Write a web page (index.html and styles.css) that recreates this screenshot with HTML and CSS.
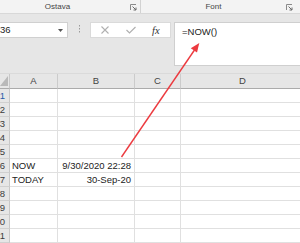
FILE: index.html
```html
<!DOCTYPE html>
<html>
<head>
<meta charset="utf-8">
<link rel="stylesheet" href="styles.css">
</head>
<body>
<div class="app">
  <div class="ribbon">
    <div class="group group-first">
      <span class="group-label">Ostava</span>
      <svg class="launcher" width="7" height="7" viewBox="0 0 7 7"><path d="M0.5 6V0.5H6" fill="none" stroke="#8a8a8a"/><path d="M2.5 2.5L6 6M6 3.5V6H3.5" fill="none" stroke="#6a6a6a"/></svg>
    </div>
    <div class="group group-second">
      <span class="group-label">Font</span>
      <svg class="launcher" width="7" height="7" viewBox="0 0 7 7"><path d="M0.5 6V0.5H6" fill="none" stroke="#8a8a8a"/><path d="M2.5 2.5L6 6M6 3.5V6H3.5" fill="none" stroke="#6a6a6a"/></svg>
    </div>
  </div>

  <div class="formula-row">
    <div class="name-box">
      <span class="name-text">36</span>
      <svg class="dropdown" width="5" height="3" viewBox="0 0 5 3"><path d="M0 0H5L2.5 3Z" fill="#555"/></svg>
    </div>
    <div class="grip"><span></span><span></span><span></span></div>
    <div class="fx-buttons">
      <svg class="btn-icon" width="8" height="8" viewBox="0 0 8 8"><path d="M0.5 0.5L7.5 7.5M7.5 0.5L0.5 7.5" stroke="#b0b0b0" stroke-width="1.1"/></svg>
      <svg class="btn-icon" width="10" height="8" viewBox="0 0 10 8"><path d="M0.5 4L3.5 7L9.5 1" fill="none" stroke="#b0b0b0" stroke-width="1.2"/></svg>
      <span class="fx">fx</span>
    </div>
    <div class="formula-input">=NOW()</div>
  </div>

  <div class="sheet">
    <div class="row head-row">
      <div class="rh corner"><svg width="9" height="14" viewBox="0 0 9 14"><path d="M8 2V12H0Z" fill="#b9b9b9"/></svg></div>
      <div class="c ca ch">A</div>
      <div class="c cb ch">B</div>
      <div class="c cc ch">C</div>
      <div class="c cd ch">D</div>
    </div>
    <div class="row"><div class="rh"><span class="num active">1</span></div><div class="c ca"></div><div class="c cb"></div><div class="c cc"></div><div class="c cd"></div></div>
    <div class="row"><div class="rh"><span class="num">2</span></div><div class="c ca"></div><div class="c cb"></div><div class="c cc"></div><div class="c cd"></div></div>
    <div class="row"><div class="rh"><span class="num">3</span></div><div class="c ca"></div><div class="c cb"></div><div class="c cc"></div><div class="c cd"></div></div>
    <div class="row"><div class="rh"><span class="num">4</span></div><div class="c ca"></div><div class="c cb"></div><div class="c cc"></div><div class="c cd"></div></div>
    <div class="row"><div class="rh"><span class="num">5</span></div><div class="c ca"></div><div class="c cb"></div><div class="c cc"></div><div class="c cd"></div></div>
    <div class="row"><div class="rh"><span class="num">6</span></div><div class="c ca">NOW</div><div class="c cb num-cell">9/30/2020 22:28</div><div class="c cc"></div><div class="c cd"></div></div>
    <div class="row"><div class="rh"><span class="num">7</span></div><div class="c ca">TODAY</div><div class="c cb num-cell">30-Sep-20</div><div class="c cc"></div><div class="c cd"></div></div>
    <div class="row"><div class="rh"><span class="num">8</span></div><div class="c ca"></div><div class="c cb"></div><div class="c cc"></div><div class="c cd"></div></div>
    <div class="row"><div class="rh"><span class="num">9</span></div><div class="c ca"></div><div class="c cb"></div><div class="c cc"></div><div class="c cd"></div></div>
    <div class="row"><div class="rh"><span class="num">0</span></div><div class="c ca"></div><div class="c cb"></div><div class="c cc"></div><div class="c cd"></div></div>
    <div class="row"><div class="rh"><span class="num">1</span></div><div class="c ca"></div><div class="c cb"></div><div class="c cc"></div><div class="c cd"></div></div>
  </div>

  <svg class="callout" width="300" height="243" viewBox="0 0 300 243">
    <line x1="121.5" y1="157" x2="194.5" y2="50" stroke="#ec3b40" stroke-width="1.4"/>
    <polygon points="199.3,43 197,52.6 190.8,48.3" fill="#ec3b40"/>
  </svg>
</div>
</body>
</html>
```

FILE: styles.css
```css
* { box-sizing: border-box; }
html, body { margin: 0; padding: 0; }
body {
  width: 300px;
  height: 243px;
  overflow: hidden;
  background: #e6e6e6;
  font-family: "Liberation Sans", Arial, sans-serif;
}
.app {
  position: relative;
  width: 300px;
  height: 243px;
  overflow: hidden;
}

/* Ribbon */
.ribbon {
  display: flex;
  height: 14px;
  background: #f3f3f3;
  border-bottom: 1px solid #d8d8d8;
}
.group {
  display: flex;
  align-items: center;
  height: 13px;
  flex: none;
}
.group-first {
  margin-left: -15px;
  width: 156px;
  border-right: 1px solid #d2d2d2;
}
.group-second {
  width: 155px;
}
.group-label {
  flex: 1;
  text-align: center;
  font-size: 8px;
  color: #444;
  line-height: 13px;
}
.launcher {
  flex: none;
  margin-right: 3px;
  margin-top: 1px;
}

/* Formula bar */
.formula-row {
  display: flex;
  align-items: flex-start;
  margin-top: 8px;
  height: 44px;
}
.formula-row > * { flex: none; }
.name-box {
  display: flex;
  align-items: center;
  justify-content: space-between;
  width: 68px;
  height: 16px;
  background: #fff;
  border: 1px solid #d0d0d0;
  border-left: 0;
  padding: 0 4px 0 0;
}
.name-text {
  font-size: 9.5px;
  color: #222;
  line-height: 14px;
}
.dropdown { flex: none; }
.grip {
  display: flex;
  flex-direction: column;
  gap: 2px;
  width: 22px;
  align-items: center;
  padding-top: 3px;
  height: 16px;
}
.grip span {
  width: 1px;
  height: 1px;
  background: #9a9a9a;
  box-shadow: 0 1px 0 #c0c0c0;
}
.fx-buttons {
  display: flex;
  align-items: center;
  width: 81px;
  height: 16px;
  background: #fff;
  border: 1px solid #dadada;
  padding-left: 10px;
  gap: 17px;
}
.btn-icon { flex: none; }
.fx {
  font-family: "Liberation Serif", "Times New Roman", serif;
  font-style: italic;
  font-size: 10.5px;
  color: #333;
  margin-left: -1px;
}
.formula-input {
  margin-left: 3px;
  width: 140px;
  height: 44px;
  background: #fff;
  border: 1px solid #cfcfcf;
  padding: 3px 0 0 7px;
  font-size: 9.5px;
  color: #222;
  line-height: 12px;
}

/* Sheet */
.sheet {
  margin-top: 7px;
  background: #fff;
}
.row {
  display: flex;
  height: 14px;
}
.head-row {
  height: 16px;
  background: #e6e6e6;
  border-top: 1px solid #dadada;
}
.rh {
  flex: none;
  width: 10px;
  display: flex;
  justify-content: flex-end;
  align-items: center;
  overflow: hidden;
  background: #e6e6e6;
  border-right: 1px solid #c8c8c8;
  border-bottom: 1px solid #d0d0d0;
  padding-right: 4px;
}
.head-row .rh {
  padding: 0;
  border-bottom: 1px solid #ababab;
  align-items: flex-start;
  justify-content: flex-start;
}
.num {
  flex: none;
  font-size: 9.5px;
  color: #3c3c3c;
  line-height: 13px;
  white-space: nowrap;
}
.num.active { color: #2a5ba8; }
.c {
  flex: none;
  border-right: 1px solid #e0e0e0;
  border-bottom: 1px solid #e0e0e0;
  font-size: 9.5px;
  color: #222;
  line-height: 13px;
  padding-left: 2px;
  white-space: nowrap;
  overflow: hidden;
}
.ca { width: 48px; }
.cb { width: 77px; }
.cc { width: 46px; }
.cd { width: 124px; }
.ch {
  text-align: center;
  padding: 0;
  color: #444;
  font-size: 9.5px;
  line-height: 14px;
  border-right: 1px solid #cbcbcb;
  border-bottom: 1px solid #ababab;
}
.num-cell {
  text-align: right;
  padding-right: 3px;
}

.callout {
  position: absolute;
  left: 0;
  top: 0;
  pointer-events: none;
}
```
